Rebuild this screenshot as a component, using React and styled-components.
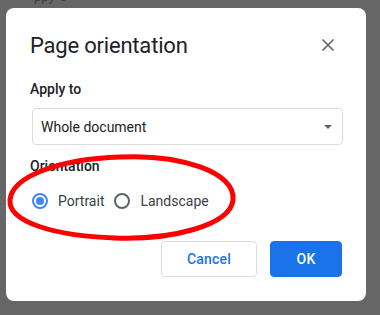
import React, { useState } from "react"
import styled, { createGlobalStyle } from "styled-components"

const GlobalStyle = createGlobalStyle`
  html, body {
    margin: 0;
    padding: 0;
    background: #666666;
    font-family: Roboto, "Noto Sans", Arial, sans-serif;
  }
  #root {
    width: 380px;
    height: 315px;
    overflow: hidden;
  }
`

const Page = styled.div`
  width: 380px;
  height: 315px;
  padding: 8px 0 0 6px;
  box-sizing: border-box;
  position: relative;
`

// text of the document behind the dialog, mostly out of view
const PeekText = styled.div`
  position: absolute;
  top: -11px;
  left: 34px;
  font-size: 13px;
  line-height: 15px;
  color: #202124;
  opacity: 0.55;
`

const Dialog = styled.div`
  width: 360px;
  height: 293px;
  background: #fff;
  border-radius: 8px;
  box-sizing: border-box;
  padding: 24px 23px 0 24px;
  display: flex;
  flex-direction: column;
  position: relative;
`

const Header = styled.div`
  display: flex;
  align-items: center;
  justify-content: space-between;
  height: 26px;
`

const Title = styled.h1`
  margin: 0;
  font-size: 22px;
  font-weight: 400;
  color: #202124;
  letter-spacing: -0.2px;
`

const CloseButton = styled.button`
  border: 0;
  background: none;
  padding: 0;
  width: 24px;
  height: 24px;
  margin-right: 3px;
  display: flex;
  align-items: center;
  justify-content: center;
  cursor: pointer;
`

const Label = styled.div`
  font-size: 14px;
  font-weight: 500;
  color: #202124;
  margin-top: ${(p) => p.$top}px;
`

const Select = styled.div`
  margin: 11px 0 0 2px;
  height: 37px;
  border: 1px solid #dadce0;
  border-radius: 4px;
  box-sizing: border-box;
  display: flex;
  align-items: center;
  justify-content: space-between;
  padding: 0 10px 0 8px;
  font-size: 14px;
  color: #202124;
`

const Arrow = styled.span`
  width: 0;
  height: 0;
  border-left: 4px solid transparent;
  border-right: 4px solid transparent;
  border-top: 4px solid #5f6368;
`

const RadioRow = styled.div`
  display: flex;
  align-items: center;
  margin-top: 19px;
  margin-left: 2px;
`

const RadioOption = styled.label`
  display: flex;
  align-items: center;
  gap: 10px;
  font-size: 14px;
  color: #3c4043;
  margin-right: 10px;
  cursor: pointer;
`

const RadioCircle = styled.span`
  width: 16px;
  height: 16px;
  border-radius: 50%;
  box-sizing: border-box;
  border: 2px solid ${(p) => (p.$checked ? "#4285f4" : "#5f6368")};
  display: flex;
  align-items: center;
  justify-content: center;
  &::after {
    content: "";
    width: 8px;
    height: 8px;
    border-radius: 50%;
    background: ${(p) => (p.$checked ? "#4285f4" : "transparent")};
  }
`

const Actions = styled.div`
  display: flex;
  justify-content: flex-end;
  gap: 13px;
  margin-top: 32px;
  margin-right: 1px;
`

const Button = styled.button`
  height: 36px;
  min-width: ${(p) => p.$width}px;
  border-radius: 4px;
  box-sizing: border-box;
  font-family: inherit;
  font-size: 14px;
  font-weight: 500;
  letter-spacing: 0.2px;
  cursor: pointer;
  border: 1px solid ${(p) => (p.$primary ? "#1a73e8" : "#dadce0")};
  background: ${(p) => (p.$primary ? "#1a73e8" : "#fff")};
  color: ${(p) => (p.$primary ? "#fff" : "#1a73e8")};
`

const Highlight = styled.svg`
  position: absolute;
  left: 0;
  top: 0;
  pointer-events: none;
`

function App() {
  const [orientation, setOrientation] = useState("portrait")

  return (
    <>
      <GlobalStyle />
      <Page>
        <PeekText>ppy ©</PeekText>
        <Dialog>
          <Header>
            <Title>Page orientation</Title>
            <CloseButton aria-label="Close">
              <svg width="14" height="14" viewBox="0 0 14 14">
                <path d="M1.5 1.5L12.5 12.5M12.5 1.5L1.5 12.5" stroke="#5f6368" strokeWidth="1.6" />
              </svg>
            </CloseButton>
          </Header>
          <Label $top={23}>Apply to</Label>
          <Select>
            <span>Whole document</span>
            <Arrow />
          </Select>
          <Label $top={13}>Orientation</Label>
          <RadioRow>
            <RadioOption onClick={() => setOrientation("portrait")}>
              <RadioCircle $checked={orientation === "portrait"} />
              Portrait
            </RadioOption>
            <RadioOption onClick={() => setOrientation("landscape")}>
              <RadioCircle $checked={orientation === "landscape"} />
              Landscape
            </RadioOption>
          </RadioRow>
          <Actions>
            <Button $width={96}>Cancel</Button>
            <Button $primary $width={72}>OK</Button>
          </Actions>
        </Dialog>
        <Highlight width="380" height="315" viewBox="0 0 380 315">
          <path
            d="M120 157 C 180 154, 236 172, 233 200 C 230 226, 170 240, 115 238 C 55 236, 8 222, 10 200 C 12 176, 60 159, 120 157 Z"
            fill="none"
            stroke="#ff0000"
            strokeWidth="5"
          />
        </Highlight>
      </Page>
    </>
  )
}

export default App
